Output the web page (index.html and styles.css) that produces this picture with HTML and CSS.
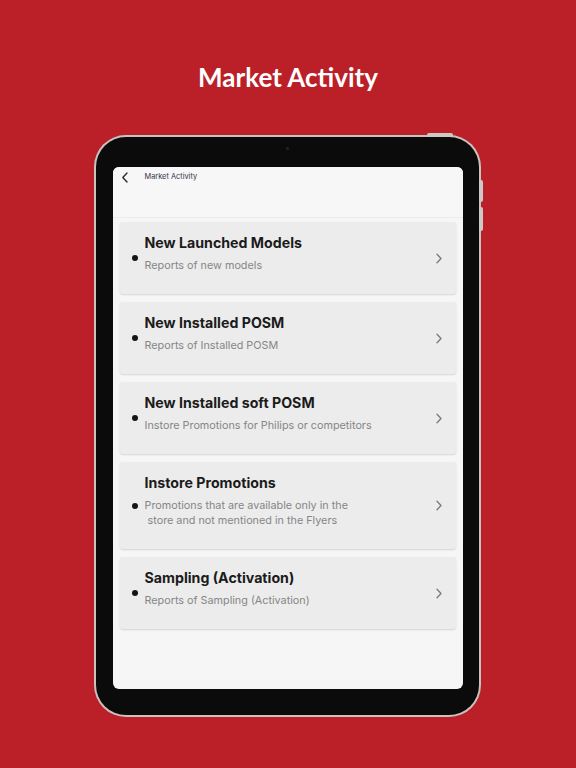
FILE: index.html
```html
<!DOCTYPE html>
<html lang="en">
<head>
<meta charset="utf-8">
<title>Market Activity</title>
<link rel="stylesheet" href="styles.css">
</head>
<body>
<div class="page">
  <h1 class="headline">Market Activity</h1>
  <div class="tablet">
    <span class="btn-top"></span>
    <span class="btn-side btn-side-1"></span>
    <span class="btn-side btn-side-2"></span>
    <div class="bezel">
      <span class="camera"></span>
      <div class="screen">
        <div class="appbar">
          <svg class="back" width="8" height="11" viewBox="0 0 8 11"><path d="M6 1 L1.8 5.5 L6 10" fill="none" stroke="#2b2b33" stroke-width="1.4" stroke-linecap="round" stroke-linejoin="round"/></svg>
          <span class="appbar-title">Market Activity</span>
        </div>
        <div class="list">
          <div class="card">
            <span class="dot"></span>
            <div class="text">
              <div class="title">New Launched Models</div>
              <div class="sub">Reports of new models</div>
            </div>
            <svg class="chev" width="8" height="11" viewBox="0 0 8 11"><path d="M2 1.2 L6 5.5 L2 9.8" fill="none" stroke="#7a7a7a" stroke-width="1.3" stroke-linecap="round" stroke-linejoin="round"/></svg>
          </div>
          <div class="card">
            <span class="dot"></span>
            <div class="text">
              <div class="title">New Installed POSM</div>
              <div class="sub">Reports of Installed POSM</div>
            </div>
            <svg class="chev" width="8" height="11" viewBox="0 0 8 11"><path d="M2 1.2 L6 5.5 L2 9.8" fill="none" stroke="#7a7a7a" stroke-width="1.3" stroke-linecap="round" stroke-linejoin="round"/></svg>
          </div>
          <div class="card">
            <span class="dot"></span>
            <div class="text">
              <div class="title">New Installed soft POSM</div>
              <div class="sub">Instore Promotions for Philips or competitors</div>
            </div>
            <svg class="chev" width="8" height="11" viewBox="0 0 8 11"><path d="M2 1.2 L6 5.5 L2 9.8" fill="none" stroke="#7a7a7a" stroke-width="1.3" stroke-linecap="round" stroke-linejoin="round"/></svg>
          </div>
          <div class="card">
            <span class="dot"></span>
            <div class="text">
              <div class="title">Instore Promotions</div>
              <div class="sub">Promotions that are available only in the<br>&nbsp;store and not mentioned in the Flyers</div>
            </div>
            <svg class="chev" width="8" height="11" viewBox="0 0 8 11"><path d="M2 1.2 L6 5.5 L2 9.8" fill="none" stroke="#7a7a7a" stroke-width="1.3" stroke-linecap="round" stroke-linejoin="round"/></svg>
          </div>
          <div class="card">
            <span class="dot"></span>
            <div class="text">
              <div class="title">Sampling (Activation)</div>
              <div class="sub">Reports of Sampling (Activation)</div>
            </div>
            <svg class="chev" width="8" height="11" viewBox="0 0 8 11"><path d="M2 1.2 L6 5.5 L2 9.8" fill="none" stroke="#7a7a7a" stroke-width="1.3" stroke-linecap="round" stroke-linejoin="round"/></svg>
          </div>
        </div>
      </div>
    </div>
  </div>
</div>
</body>
</html>
```
FILE: styles.css
```css
* { box-sizing: border-box; }
html, body { margin: 0; padding: 0; }
body {
  background: #bb1f27;
  width: 576px;
  height: 768px;
  overflow: hidden;
  font-family: Inter, "Noto Sans", sans-serif;
}
.page {
  display: flex;
  flex-direction: column;
  align-items: center;
  padding-top: 60px;
}
.headline {
  margin: 0;
  color: #ffffff;
  font-family: Lato, "Open Sans", sans-serif;
  font-weight: 700;
  font-size: 26px;
  line-height: 34px;
}
.tablet {
  position: relative;
  margin-top: 41px;
  margin-left: -2px;
  width: 387px;
  height: 582px;
  border-radius: 32px;
  background: #c9c2be;
  padding: 2px;
}
.btn-top {
  position: absolute;
  top: -2px;
  left: 333px;
  width: 26px;
  height: 4px;
  border-radius: 2px 2px 0 0;
  background: #cfc9c6;
}
.btn-side {
  position: absolute;
  right: -2px;
  width: 4px;
  border-radius: 0 2px 2px 0;
  background: #cfc9c6;
}
.btn-side-1 { top: 45px; height: 22px; }
.btn-side-2 { top: 72px; height: 24px; }
.bezel {
  position: relative;
  width: 100%;
  height: 100%;
  border-radius: 30px;
  background: #0b0b0b;
  padding: 30px 16px 26px 17px;
}
.camera {
  position: absolute;
  top: 10px;
  left: 190px;
  width: 3px;
  height: 3px;
  border-radius: 50%;
  background: #1d2240;
}
.screen {
  width: 100%;
  height: 100%;
  background: #f6f6f6;
  border-radius: 6px;
  overflow: hidden;
}
.appbar {
  height: 51px;
  display: flex;
  align-items: flex-start;
  padding: 5px 0 0 8px;
  border-bottom: 1px solid #ebebeb;
  background: #f7f7f7;
}
.back { display: block; }
.appbar-title {
  margin-left: 16px;
  font-size: 7.4px;
  line-height: 10px;
  color: #34354a;
}
.list {
  display: flex;
  flex-direction: column;
  gap: 8px;
  padding: 4px 7px 0 7px;
}
.card {
  display: flex;
  align-items: center;
  background: #ececec;
  border-radius: 3px;
  box-shadow: 0 1px 2px rgba(0,0,0,0.14);
  padding: 0 13px 0 12px;
}
.dot {
  flex: none;
  width: 6px;
  height: 6px;
  border-radius: 50%;
  background: #151515;
}
.text {
  flex: 1;
  padding: 12px 0 21px 7px;
}
.title {
  font-weight: 700;
  font-size: 14.2px;
  line-height: 18px;
  color: #1b1b1b;
}
.sub {
  margin-top: 6px;
  font-size: 10.8px;
  line-height: 15px;
  color: #868686;
}
.chev { flex: none; display: block; }
```
